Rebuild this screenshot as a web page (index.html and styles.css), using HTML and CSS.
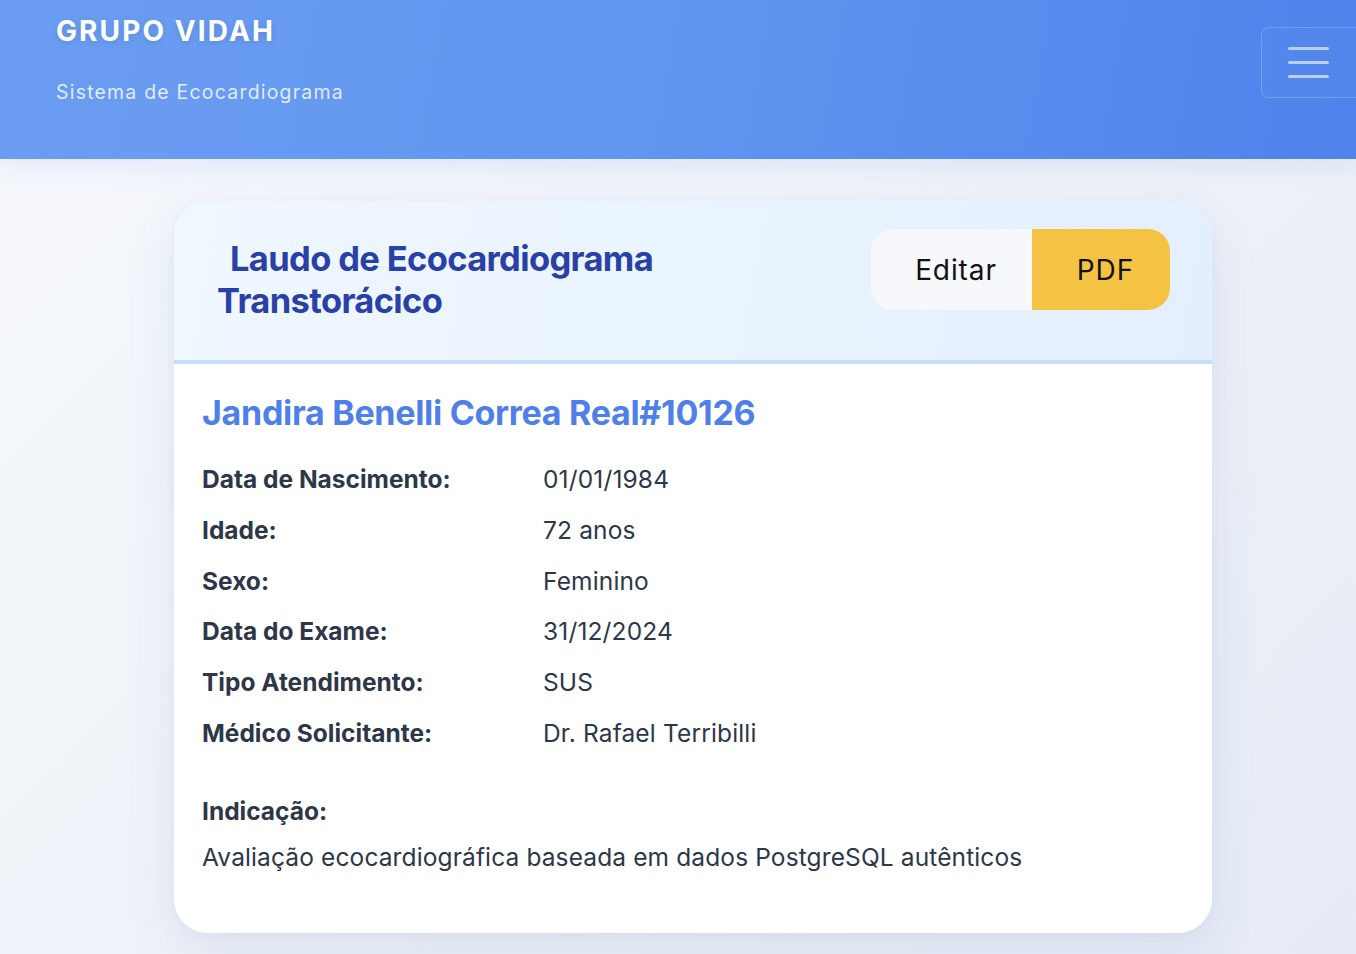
FILE: index.html
```html
<!DOCTYPE html>
<html lang="pt-BR">
<head>
<meta charset="utf-8">
<title>Grupo Vidah - Laudo</title>
<link rel="stylesheet" href="styles.css">
</head>
<body>
<header class="topbar">
  <div class="brand">
    <div class="brand-name">GRUPO VIDAH</div>
    <div class="brand-sub">Sistema de Ecocardiograma</div>
  </div>
  <button class="menu-btn" aria-label="Menu">
    <span class="bar"></span><span class="bar"></span><span class="bar"></span>
  </button>
</header>
<main class="page">
  <section class="card">
    <div class="card-head">
      <h1 class="title">Laudo de Ecocardiograma Transtorácico</h1>
      <div class="actions">
        <button class="btn btn-edit">Editar</button>
        <button class="btn btn-pdf">PDF</button>
      </div>
    </div>
    <div class="card-body">
      <h2 class="patient">Jandira Benelli Correa Real#10126</h2>
      <div class="info">
        <div class="label">Data de Nascimento:</div><div class="value">01/01/1984</div>
        <div class="label">Idade:</div><div class="value">72 anos</div>
        <div class="label">Sexo:</div><div class="value">Feminino</div>
        <div class="label">Data do Exame:</div><div class="value">31/12/2024</div>
        <div class="label">Tipo Atendimento:</div><div class="value">SUS</div>
        <div class="label">Médico Solicitante:</div><div class="value">Dr. Rafael Terribilli</div>
      </div>
      <div class="indication">
        <div class="label">Indicação:</div>
        <p class="indication-text">Avaliação ecocardiográfica baseada em dados PostgreSQL autênticos</p>
      </div>
    </div>
  </section>
</main>
</body>
</html>
```

FILE: styles.css
```css
* { box-sizing: border-box; }

html, body {
  margin: 0;
  padding: 0;
}

body {
  font-family: Inter, "Noto Sans", "Liberation Sans", sans-serif;
  background: linear-gradient(135deg, #f6f8fc 0%, #eef2f8 50%, #e6ebf6 100%);
  min-height: 954px;
  overflow-x: hidden;
  color: #2d3748;
}

.topbar {
  height: 159px;
  background: linear-gradient(100deg, #6b9ef2 0%, #6296ef 45%, #4f83eb 100%);
  box-shadow: 0 6px 24px rgba(80, 120, 220, 0.12);
  display: flex;
  justify-content: space-between;
  align-items: flex-start;
  padding-left: 56px;
}

.brand {
  padding-top: 14px;
}

.brand-name {
  color: #ffffff;
  font-weight: 700;
  font-size: 28px;
  line-height: 34px;
  letter-spacing: 2.1px;
  text-shadow: 0 2px 6px rgba(0, 0, 0, 0.12);
}

.brand-sub {
  margin-top: 32px;
  color: rgba(255, 255, 255, 0.82);
  font-size: 19.5px;
  line-height: 24px;
  letter-spacing: 1.2px;
}

.menu-btn {
  margin-top: 27px;
  margin-right: -6px;
  width: 101px;
  height: 71px;
  border: 1.5px solid rgba(255, 255, 255, 0.18);
  border-radius: 8px;
  background: rgba(255, 255, 255, 0.02);
  display: flex;
  flex-direction: column;
  justify-content: center;
  align-items: flex-start;
  gap: 11px;
  padding: 0 0 0 26px;
}

.menu-btn .bar {
  display: block;
  width: 41px;
  height: 3px;
  border-radius: 2px;
  background: rgba(255, 255, 255, 0.6);
}

.page {
  padding: 42px 144px 21px 174px;
}

.card {
  background: #ffffff;
  border-radius: 34px;
  overflow: hidden;
  box-shadow: 0 18px 50px rgba(60, 90, 170, 0.10), 0 2px 8px rgba(60, 90, 170, 0.04);
}

.card-head {
  display: flex;
  justify-content: space-between;
  align-items: flex-start;
  padding: 28px 42px 38px 43px;
  background: linear-gradient(100deg, #eff7ff 0%, #eaf4fe 50%, #e3effd 100%);
  border-bottom: 4px solid #c5ddf8;
}

.title {
  margin: 9px 0 0 0;
  max-width: 520px;
  font-size: 34.5px;
  line-height: 42px;
  font-weight: 700;
  letter-spacing: -0.65px;
  text-indent: 13px;
  color: #2940a6;
}

.actions {
  display: flex;
  border-radius: 22px;
  overflow: hidden;
}

.btn {
  font-family: Inter, "Noto Sans", sans-serif;
  font-size: 28px;
  line-height: 34px;
  letter-spacing: 0.9px;
  color: #111111;
  border: none;
  padding: 24px 0 23px 9px;
  margin: 0;
  text-align: center;
}

.btn-edit {
  background: #f6f8fb;
  width: 161px;
}

.btn-pdf {
  background: #f5c344;
  width: 138px;
}

.card-body {
  padding: 29px 28px 58px 28px;
}

.patient {
  margin: 0;
  font-size: 34px;
  line-height: 40px;
  font-weight: 700;
  letter-spacing: -0.3px;
  color: #4f80ea;
}

.info {
  margin-top: 28px;
  display: grid;
  grid-template-columns: 341px 1fr;
  row-gap: 14.8px;
}

.label {
  font-size: 24.5px;
  line-height: 36px;
  font-weight: 700;
  letter-spacing: 0;
  color: #2d3748;
}

.value {
  font-size: 24.5px;
  line-height: 36px;
  letter-spacing: 0.15px;
  color: #2d3748;
}

.indication {
  margin-top: 42px;
}

.indication-text {
  margin: 10px 0 0 0;
  font-size: 24.5px;
  line-height: 36px;
  letter-spacing: 0.12px;
  color: #2d3748;
}
```
